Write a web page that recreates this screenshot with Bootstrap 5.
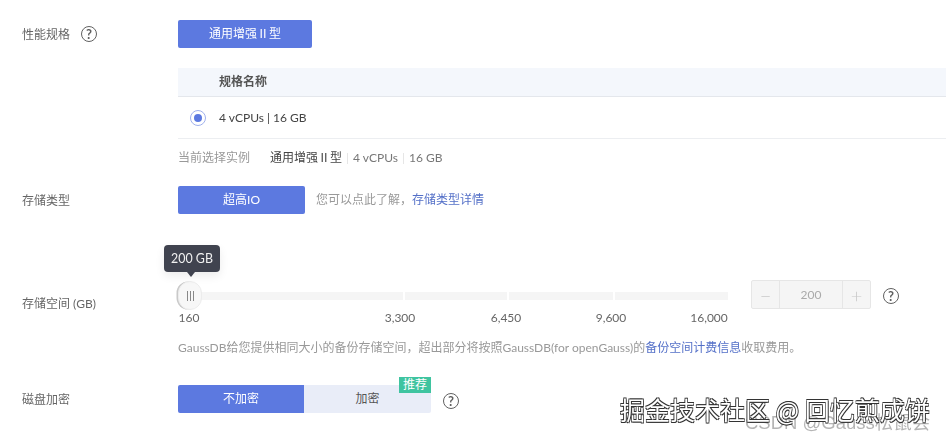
<!DOCTYPE html>
<html lang="zh-CN">
<head>
    <meta charset="UTF-8">
    <meta name="viewport" content="width=device-width, initial-scale=1.0">
    <title>存储配置</title>
    <link href="https://cdn.jsdelivr.net/npm/bootstrap@5.3.0/dist/css/bootstrap.min.css" rel="stylesheet">
    <style>
        html, body { height: 440px; overflow: hidden; }
        body {
            position: relative;
            font-family: Lato, "Noto Sans CJK SC", sans-serif;
            font-size: 12px;
            line-height: 16px;
            color: #5a5a5a;
            background: #fff;
            filter: blur(.3px);
        }
        .page-wrap { height: 437px; padding-top: 20px; border-bottom: 2px solid #e6e8ea; box-sizing: content-box; }
        .form-line { display: flex; }
        .gap-spec { margin-top: 20px; }
        .gap-type { margin-top: 9px; }
        .gap-size { margin-top: 66px; }
        .gap-disk { margin-top: 29px; }
        .form-name { width: 178px; flex: none; padding: 2px 0 0 22px; color: #666; display: flex; align-items: center; }
        .name-low { padding-top: 10px; margin-bottom: -9px; }
        .form-body { flex: 1; min-width: 0; }
        .tab-on {
            height: 28px; background: #5c79e0; color: #fff; border-radius: 2px;
            display: flex; align-items: center; justify-content: center;
        }
        .tab-wide { width: 134px; }
        .tab-short { width: 127px; }
        .help-dot {
            width: 16px; height: 16px; border: 1.5px solid #606060; border-radius: 50%; flex: none;
            display: inline-flex; align-items: center; justify-content: center;
            font-size: 13px; font-weight: 700; color: #606060; line-height: 1;
        }
        .help-name { margin-left: 11px; margin-top: -2px; }
        .help-size { margin-left: 12px; margin-top: 8px; }
        .help-disk { margin-left: 12px; margin-top: 4px; }
        .spec-head { height: 29px; background: #f4f7fc; border-bottom: 1px solid #e4e7ec; padding-left: 41px; font-weight: 700; color: #555; display: flex; align-items: center; }
        .spec-row { height: 42px; border-bottom: 1px solid #eceef1; display: flex; align-items: center; color: #444; }
        .radio-out { width: 16px; height: 16px; margin-left: 12px; margin-right: 13px; border: 1px solid #9fb0ec; border-radius: 50%; display: flex; align-items: center; justify-content: center; }
        .radio-in { width: 8px; height: 8px; border-radius: 50%; background: #5c79e0; }
        .picked { height: 38px; display: flex; align-items: center; color: #999; }
        .picked b { font-weight: 400; color: #444; margin-left: 20px; }
        .picked i { font-style: normal; color: #777; }
        .picked s { text-decoration: none; color: #e2e2e2; margin: 0 4px; }
        .hint { color: #999; margin-left: 11px; }
        .link-blue { color: #5470c8; text-decoration: none; }
        .slider-box { position: relative; width: 550px; height: 29px; }
        .track { position: absolute; top: 12px; left: 0; right: 0; height: 8px; display: flex; gap: 2px; }
        .track span { background: #f5f5f5; height: 100%; }
        .thumb {
            position: absolute; left: 0; top: 1px; width: 24px; height: 29px; border-radius: 12px;
            background: #f7f7f7; border: 1px solid #ececec; display: flex; align-items: center; justify-content: center; gap: 2px;
            box-shadow: -2px 0 0 -0.5px #c9c9c9;
        }
        .thumb > span { width: 1px; height: 10px; background: #888; }
        .tip-box {
            position: absolute; left: -15px; top: -37px; width: 56px; height: 27px; background: #40434f;
            color: #f0f0f0; border-radius: 4px; display: flex; align-items: center; justify-content: center;
            box-shadow: 0 4px 10px rgba(0,0,0,.08); font-size: 12.4px;
        }
        .tip-box::after {
            content: ""; position: absolute; left: 23px; bottom: -5px;
            border-left: 4px solid transparent; border-right: 4px solid transparent; border-top: 5px solid #40434f;
        }
        .tick-line { position: relative; width: 550px; height: 16px; margin-top: 1px; color: #666; }
        .tick-line span { position: absolute; top: 0; transform: translateX(-50%); }
        .stepper { width: 120px; height: 29px; margin-left: 23px; border: 1px solid #e6e6e6; background: #f5f5f5; display: flex; color: #bbb; border-radius: 2px; }
        .stepper div { display: flex; align-items: center; justify-content: center; }
        .step-btn { width: 27px; flex: none; font-size: 20px; font-weight: 300; color: #c8c8c8; }
        .step-val { flex: 1; border-left: 1px solid #e6e6e6; border-right: 1px solid #e6e6e6; color: #aaa; }
        .note-line { margin-top: 14px; height: 16px; color: #999; white-space: nowrap; }
        .seg-on { width: 126px; height: 28px; background: #5c79e0; color: #fff; border-radius: 2px 0 0 2px; display: flex; align-items: center; justify-content: center; }
        .seg-off { position: relative; width: 127px; height: 28px; background: #e9edf8; color: #555; border-radius: 0 2px 2px 0; display: flex; align-items: center; justify-content: center; }
        .tag-rec { position: absolute; right: 0; top: -8px; width: 32px; height: 16px; background: #3fc4a0; color: #fff; font-size: 12px; display: flex; align-items: center; justify-content: center; }
        .mark-main {
            position: absolute; left: 620px; top: 394px; font-size: 25px; line-height: 30px; white-space: nowrap;
            color: #fff; text-shadow: -.7px -.7px 0 #333, .7px -.7px 0 #333, -.7px .7px 0 #333, .7px .7px 0 #333;
            font-family: "Noto Sans CJK SC", sans-serif;
        }
        .mark-sub {
            position: absolute; left: 745px; top: 411px; font-size: 18.5px; line-height: 24px; white-space: nowrap;
            color: rgba(120,120,120,.55); font-family: "Liberation Sans", "Noto Sans CJK SC", sans-serif;
        }
    </style>
</head>
<body>
    <div class="page-wrap">
        <div class="form-line">
            <div class="form-name">性能规格<span class="help-dot help-name">?</span></div>
            <div class="form-body">
                <div class="tab-on tab-wide">通用增强Ⅱ型</div>
            </div>
        </div>

        <div class="form-line gap-spec">
            <div class="form-name"></div>
            <div class="form-body">
                <div class="spec-head">规格名称</div>
                <div class="spec-row"><span class="radio-out"><span class="radio-in"></span></span>4 vCPUs | 16 GB</div>
                <div class="picked">当前选择实例<b>通用增强Ⅱ型</b><s>|</s><i>4 vCPUs</i><s>|</s><i>16 GB</i></div>
            </div>
        </div>

        <div class="form-line gap-type">
            <div class="form-name">存储类型</div>
            <div class="form-body d-flex align-items-center">
                <div class="tab-on tab-short">超高IO</div>
                <span class="hint">您可以点此了解，<a href="#" class="link-blue">存储类型详情</a></span>
            </div>
        </div>

        <div class="form-line gap-size">
            <div class="form-name name-low">存储空间 (GB)</div>
            <div class="form-body d-flex align-items-start">
                <div class="slider-box">
                    <div class="track">
                        <span style="width:225px"></span><span style="width:102px"></span><span style="width:104px"></span><span style="width:113px"></span>
                    </div>
                    <div class="thumb"><span></span><span></span><span></span>
                        <div class="tip-box">200 GB</div>
                    </div>
                </div>
                <div class="stepper">
                    <div class="step-btn">−</div>
                    <div class="step-val">200</div>
                    <div class="step-btn">+</div>
                </div>
                <span class="help-dot help-size">?</span>
            </div>
        </div>

        <div class="form-line">
            <div class="form-name"></div>
            <div class="form-body">
                <div class="tick-line">
                    <span style="left:11px">160</span>
                    <span style="left:222px">3,300</span>
                    <span style="left:328px">6,450</span>
                    <span style="left:433px">9,600</span>
                    <span style="left:531px">16,000</span>
                </div>
                <div class="note-line">GaussDB给您提供相同大小的备份存储空间，超出部分将按照GaussDB(for openGauss)的<a href="#" class="link-blue">备份空间计费信息</a>收取费用。</div>
            </div>
        </div>

        <div class="form-line gap-disk">
            <div class="form-name">磁盘加密</div>
            <div class="form-body d-flex align-items-center">
                <div class="seg-on">不加密</div>
                <div class="seg-off">加密<span class="tag-rec">推荐</span></div>
                <span class="help-dot help-disk">?</span>
            </div>
        </div>
    </div>

    <div class="mark-sub">CSDN @Gauss松鼠会</div>
    <div class="mark-main">掘金技术社区 @ 回忆煎成饼</div>
</body>
</html>
